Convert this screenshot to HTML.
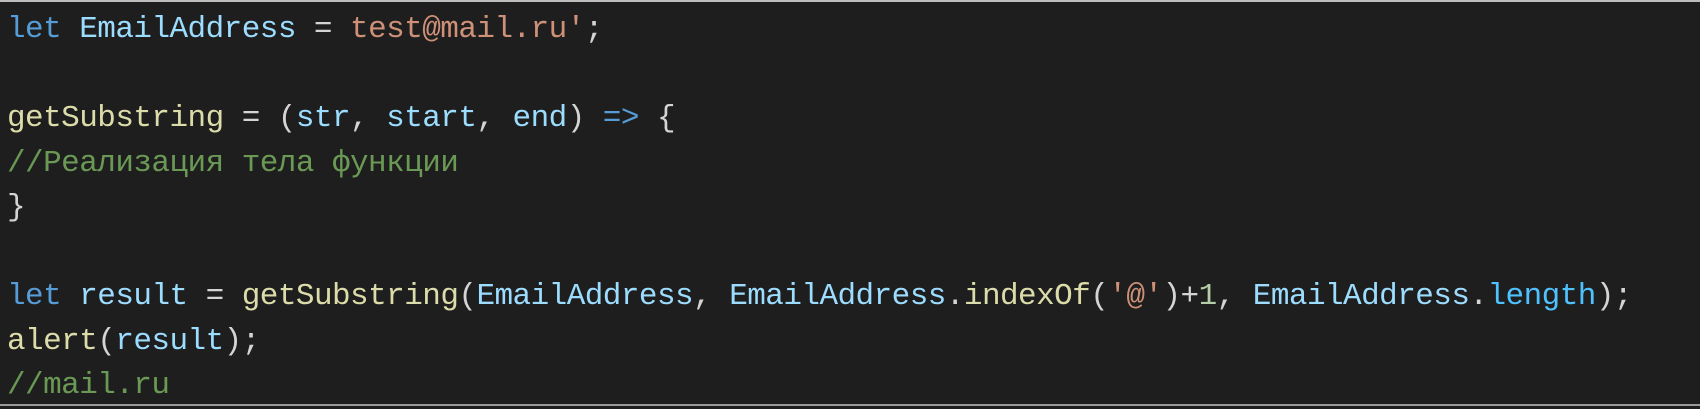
<!DOCTYPE html>
<html><head><meta charset="utf-8"><style>
html,body{margin:0;padding:0;background:#1e1e1e;}
body{width:1700px;height:406px;overflow:hidden;box-sizing:border-box;border-top:2px solid #bdbdbd;border-bottom:2px solid #9a9a9a;}
pre{margin:0;padding:6px 0 0 7px;font-family:"Liberation Mono","DejaVu Sans Mono",monospace;font-size:31px;letter-spacing:-0.55px;line-height:44.5px;color:#d4d4d4;}
.k{color:#569cd6}.v{color:#9cdcfe}.s{color:#ce9178}.f{color:#dcdcaa}.c{color:#6a9955}.n{color:#b5cea8}.p{color:#4fc1ff}
</style></head><body><pre><span class="k">let</span> <span class="v">EmailAddress</span> = <span class="s">test@mail.ru'</span>;

<span class="f">getSubstring</span> = (<span class="v">str</span>, <span class="v">start</span>, <span class="v">end</span>) <span class="k">=&gt;</span> {
<span class="c">//Реализация тела функции</span>
}

<span class="k">let</span> <span class="v">result</span> = <span class="f">getSubstring</span>(<span class="v">EmailAddress</span>, <span class="v">EmailAddress</span>.<span class="f">indexOf</span>(<span class="s">'@'</span>)+<span class="n">1</span>, <span class="v">EmailAddress</span>.<span class="p">length</span>);
<span class="f">alert</span>(<span class="v">result</span>);
<span class="c">//mail.ru</span></pre></body></html>
